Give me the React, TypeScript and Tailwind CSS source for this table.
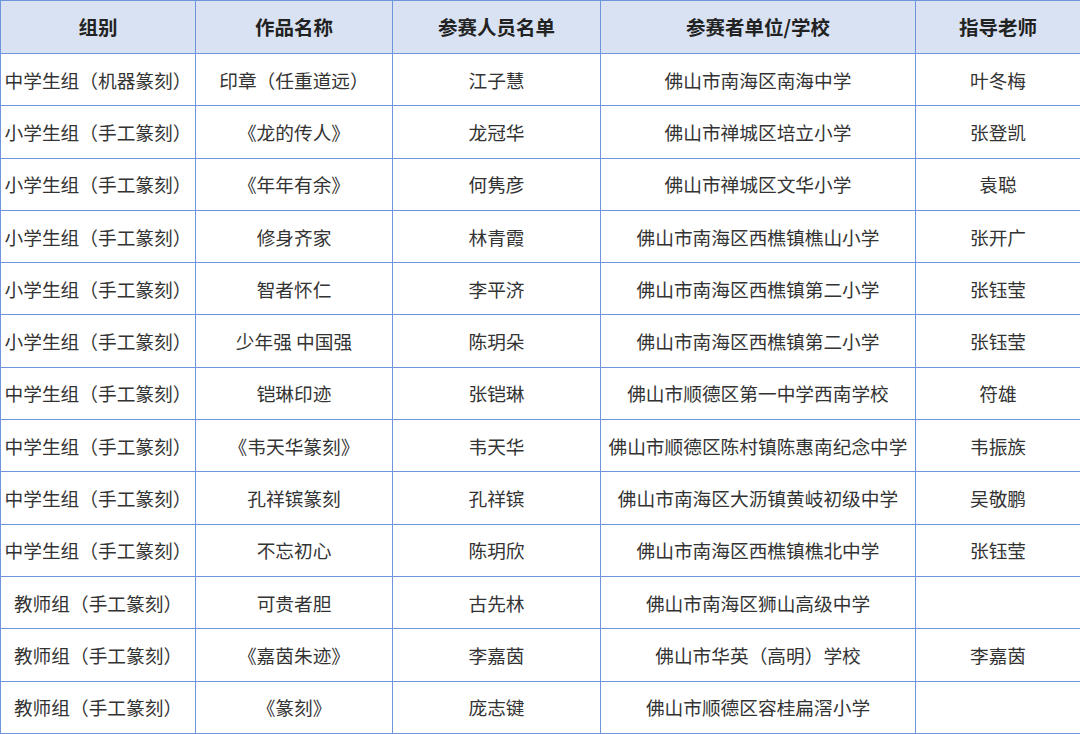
const rows: string[][] = [
  ["中学生组（机器篆刻）", "印章（任重道远）", "江子慧", "佛山市南海区南海中学", "叶冬梅"],
  ["小学生组（手工篆刻）", "《龙的传人》", "龙冠华", "佛山市禅城区培立小学", "张登凯"],
  ["小学生组（手工篆刻）", "《年年有余》", "何隽彦", "佛山市禅城区文华小学", "袁聪"],
  ["小学生组（手工篆刻）", "修身齐家", "林青霞", "佛山市南海区西樵镇樵山小学", "张开广"],
  ["小学生组（手工篆刻）", "智者怀仁", "李平济", "佛山市南海区西樵镇第二小学", "张钰莹"],
  ["小学生组（手工篆刻）", "少年强 中国强", "陈玥朵", "佛山市南海区西樵镇第二小学", "张钰莹"],
  ["中学生组（手工篆刻）", "铠琳印迹", "张铠琳", "佛山市顺德区第一中学西南学校", "符雄"],
  ["中学生组（手工篆刻）", "《韦天华篆刻》", "韦天华", "佛山市顺德区陈村镇陈惠南纪念中学", "韦振族"],
  ["中学生组（手工篆刻）", "孔祥镔篆刻", "孔祥镔", "佛山市南海区大沥镇黄岐初级中学", "吴敬鹏"],
  ["中学生组（手工篆刻）", "不忘初心", "陈玥欣", "佛山市南海区西樵镇樵北中学", "张钰莹"],
  ["教师组（手工篆刻）", "可贵者胆", "古先林", "佛山市南海区狮山高级中学", ""],
  ["教师组（手工篆刻）", "《嘉茵朱迹》", "李嘉茵", "佛山市华英（高明）学校", "李嘉茵"],
  ["教师组（手工篆刻）", "《篆刻》", "庞志键", "佛山市顺德区容桂扁滘小学", ""],
];

const headers = ["组别", "作品名称", "参赛人员名单", "参赛者单位/学校", "指导老师"];
const widths = ["w-[195px]", "w-[197px]", "w-[208px]", "w-[315px]", "w-[165px]"];

export default function App() {
  return (
    <div
      className="w-[1080px] h-[734px] overflow-hidden bg-white"
      style={{ fontFamily: '"Noto Sans CJK SC", "Noto Sans", sans-serif' }}
    >
      <table className="w-[1080px] table-fixed border-collapse">
        <thead>
          <tr className="h-[53px] bg-[#d9e2f3]">
            {headers.map((h, i) => (
              <th
                key={h}
                className={`${widths[i]} border border-[#6f95dd] text-center text-[19.5px] font-bold text-[#222] p-0`}
              >
                {h}
              </th>
            ))}
          </tr>
        </thead>
        <tbody>
          {rows.map((r, ri) => (
            <tr key={ri} className="h-[52.3px]">
              {r.map((c, ci) => (
                <td
                  key={ci}
                  className="border border-[#6f95dd] text-center text-[18.7px] text-[#333] p-0 whitespace-nowrap"
                >
                  {c}
                </td>
              ))}
            </tr>
          ))}
        </tbody>
      </table>
    </div>
  );
}
